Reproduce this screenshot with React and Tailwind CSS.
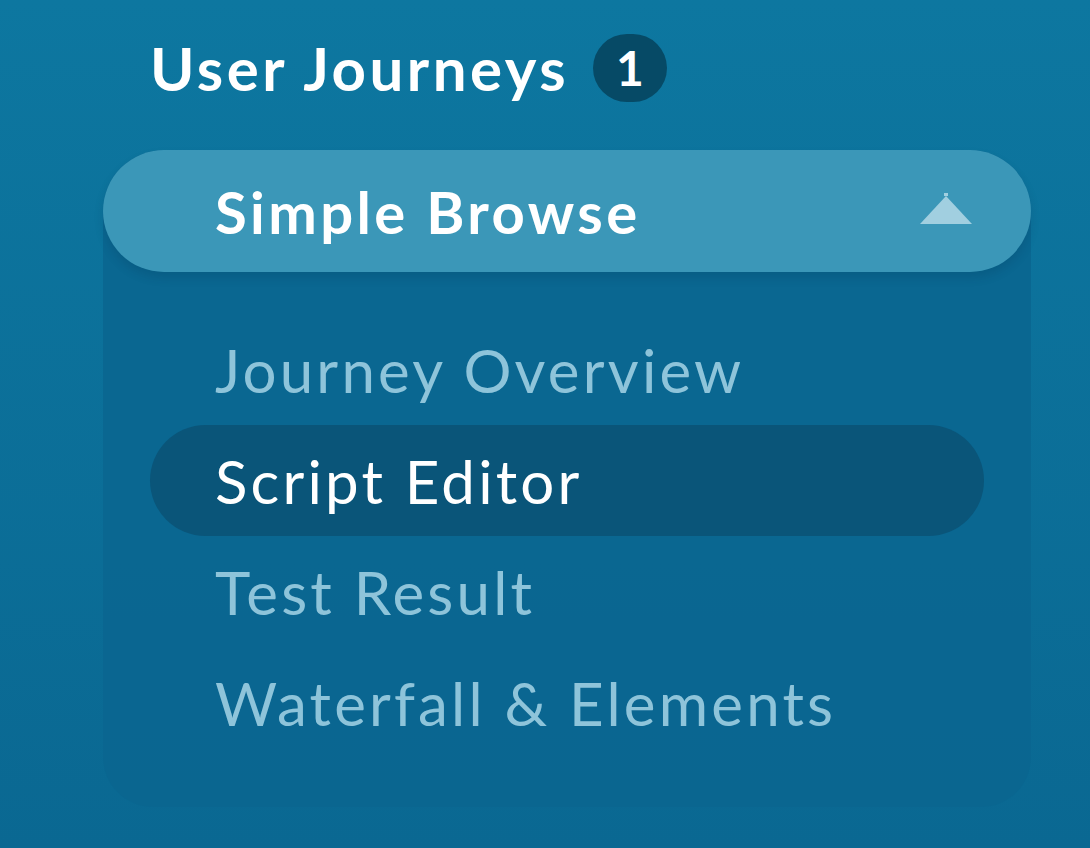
export default function App() {
    const items = [
        { label: 'Journey Overview', active: false },
        { label: 'Script Editor', active: true },
        { label: 'Test Result', active: false },
        { label: 'Waterfall & Elements', active: false },
    ];

    return (
        <div className="min-h-[848px] w-full bg-gradient-to-b from-[#0d77a0] to-[#0a6892] font-['Lato',sans-serif] pt-[25px]">
            <div className="flex items-center gap-[24px] pl-[150px]">
                <h1 className="text-[60px] font-bold text-white leading-[86px] tracking-[3.5px]">User Journeys</h1>
                <span className="w-[74px] h-[68px] rounded-full bg-[#064a66] text-white text-[48px] font-bold flex items-center justify-center">
                    1
                </span>
            </div>

            <div className="ml-[103px] mt-[39px] w-[928px] rounded-t-[61px] rounded-b-[50px] bg-[#0a6690]/90 pb-[49px]">
                <div className="h-[122px] rounded-full bg-[#3b97b8] flex items-center justify-between pl-[112px] pr-[58px] shadow-[0_6px_10px_rgba(0,40,70,0.15)]">
                    <span className="text-[58px] font-bold text-white tracking-[3.4px]">Simple Browse</span>
                    <svg width="54" height="32" viewBox="0 0 54 32" className="mt-[-4px]">
                        <polygon points="1,31 27,3 53,31" fill="#a1cfe0" />
                        <rect x="25" y="0" width="4" height="3" fill="#a1cfe0" />
                    </svg>
                </div>

                <div className="pt-[42px] flex flex-col">
                    {items.map(item => (
                        <div
                            key={item.label}
                            className={`h-[111px] mx-[47px] px-[65px] rounded-full flex items-center text-[60px] tracking-[3.2px] ${
                                item.active ? 'bg-[#0a5579] text-white' : 'text-[#8ec4da]'
                            }`}
                        >
                            {item.label}
                        </div>
                    ))}
                </div>
            </div>
        </div>
    );
}
